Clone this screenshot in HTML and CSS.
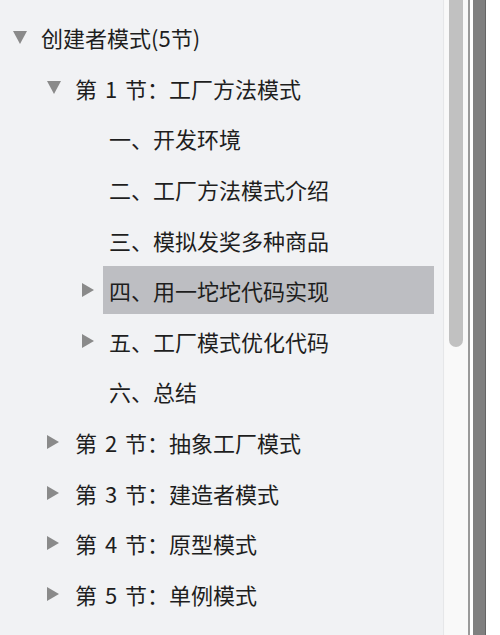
FILE: index.html
```html
<!DOCTYPE html>
<html lang="zh">
<head>
<meta charset="utf-8">
<link rel="stylesheet" href="styles.css">
</head>
<body>
<div class="window">
  <div class="tree">
    <div class="row l0"><span class="tw down"><svg width="14" height="13" viewBox="0 0 14 13"><polygon points="0,0 14,0 7,13" /></svg></span><span class="label">创建者模式(5节)</span></div>
    <div class="row l1"><span class="tw down"><svg width="14" height="13" viewBox="0 0 14 13"><polygon points="0,0 14,0 7,13" /></svg></span><span class="label sec">第 1 节：工厂方法模式</span></div>
    <div class="row l2"><span class="tw none"></span><span class="label">一、开发环境</span></div>
    <div class="row l2"><span class="tw none"></span><span class="label">二、工厂方法模式介绍</span></div>
    <div class="row l2"><span class="tw none"></span><span class="label">三、模拟发奖多种商品</span></div>
    <div class="row l2 selected"><span class="tw right"><svg width="12" height="14" viewBox="0 0 12 14"><polygon points="0,0 12,7 0,14" /></svg></span><span class="label">四、用一坨坨代码实现</span></div>
    <div class="row l2"><span class="tw right"><svg width="12" height="14" viewBox="0 0 12 14"><polygon points="0,0 12,7 0,14" /></svg></span><span class="label">五、工厂模式优化代码</span></div>
    <div class="row l2"><span class="tw none"></span><span class="label">六、总结</span></div>
    <div class="row l1"><span class="tw right"><svg width="12" height="14" viewBox="0 0 12 14"><polygon points="0,0 12,7 0,14" /></svg></span><span class="label sec">第 2 节：抽象工厂模式</span></div>
    <div class="row l1"><span class="tw right"><svg width="12" height="14" viewBox="0 0 12 14"><polygon points="0,0 12,7 0,14" /></svg></span><span class="label sec">第 3 节：建造者模式</span></div>
    <div class="row l1"><span class="tw right"><svg width="12" height="14" viewBox="0 0 12 14"><polygon points="0,0 12,7 0,14" /></svg></span><span class="label sec">第 4 节：原型模式</span></div>
    <div class="row l1"><span class="tw right"><svg width="12" height="14" viewBox="0 0 12 14"><polygon points="0,0 12,7 0,14" /></svg></span><span class="label sec">第 5 节：单例模式</span></div>
  </div>
  <div class="edge"></div>
  <div class="scrollbar"><div class="thumb"></div></div>
  <div class="divider"></div>
  <div class="gap"></div>
  <div class="darkbar"></div>
  <div class="rest"></div>
</div>
</body>
</html>
```

FILE: styles.css
```css
html, body {
  margin: 0;
  padding: 0;
  background: #ffffff;
}
.window {
  display: flex;
  width: 500px;
  height: 635px;
  overflow: hidden;
}
.tree {
  width: 443px;
  flex: none;
  background: #f1f2f4;
  padding-top: 12px;
  box-sizing: border-box;
  font-family: "Noto Sans CJK SC", "Noto Sans", sans-serif;
  font-size: 22px;
  color: #1e1e1e;
}
.row {
  height: 50.6px;
  display: flex;
  align-items: center;
  box-sizing: border-box;
}
.row.l0 { padding-left: 13px; }
.row.l1 { padding-left: 47px; }
.row.l2 { padding-left: 82px; }
.tw {
  flex: none;
  display: flex;
  align-items: center;
  width: 28px;
  height: 100%;
}
.row.l2 .tw { width: 27px; }
.tw svg polygon { fill: #8a8a8a; }
.label {
  white-space: pre;
  height: 48px;
  display: flex;
  align-items: center;
}
.label.sec {
  word-spacing: 3px;
}
.row.selected .label {
  background: #bdbec2;
  flex: 1;
  margin-right: 9px;
  padding-left: 6px;
  margin-left: -6px;
}
.edge {
  width: 2px;
  flex: none;
  background: #f8f8f8;
  border-left: 1px solid #e6e7e9;
  box-sizing: border-box;
}
.scrollbar {
  width: 23px;
  flex: none;
  background: #f9f9f9;
  padding: 0 5px 0 4px;
  box-sizing: border-box;
}
.thumb {
  height: 347px;
  background: #c1c1c1;
  border-radius: 0 0 7px 7px;
}
.divider {
  width: 2px;
  flex: none;
  background: #9a9a9a;
}
.gap {
  width: 3px;
  flex: none;
  background: #ffffff;
}
.darkbar {
  width: 13px;
  flex: none;
  background: #808080;
  border-right: 1px solid #666666;
  box-sizing: border-box;
}
.rest {
  flex: 1;
  background: #ffffff;
}
```
